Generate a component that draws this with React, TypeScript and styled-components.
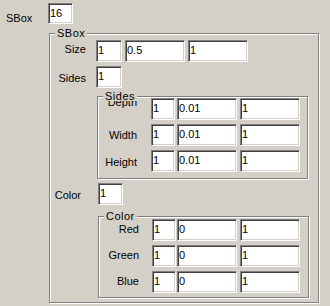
import React from 'react';
import styled, { createGlobalStyle } from 'styled-components';

const GlobalStyle = createGlobalStyle`
  body {
    margin: 0;
    background: #d4d0c8;
  }
`;

const SIDES = [
  { name: 'Depth', top: -2, values: ['1', '0.01', '1'] },
  { name: 'Width', top: 5, values: ['1', '0.01', '1'] },
  { name: 'Height', top: 6, values: ['1', '0.01', '1'] },
];

const COLORS = [
  { name: 'Red', top: 4, values: ['1', '0', '1'] },
  { name: 'Green', top: 4, values: ['1', '0', '1'] },
  { name: 'Blue', top: 4, values: ['1', '0', '1'] },
];

function App() {
  return (
    <Page>
      <GlobalStyle />
      <Row $pl={6} $h={21}>
        <Label $w={42} $top={9} $align='left'>
          SBox
        </Label>
        <Field $w={25} $h={21}>16</Field>
      </Row>

      <Group $w={270} $h={270} $mt={9} $ml={49} $pt={6}>
        <GroupTitle>SBox</GroupTitle>
        <Row>
          <Label $w={36} $top={3}>Size</Label>
          <Field $w={26} $ml={10}>1</Field>
          <Field $w={60} $ml={3}>0.5</Field>
          <Field $w={60} $ml={3}>1</Field>
        </Row>
        <Row $mt={4}>
          <Label $w={36} $top={6}>Sides</Label>
          <Field $w={26} $ml={10}>1</Field>
        </Row>

        <Group $w={211} $h={83} $mt={8} $ml={47} $pt={1} $gap={4}>
          <GroupTitle>Sides</GroupTitle>
          {SIDES.map((s) => (
            <Row key={s.name}>
              <Label $w={39} $top={s.top}>{s.name}</Label>
              <Field $w={24} $ml={14}>{s.values[0]}</Field>
              <Field $w={60} $ml={2}>{s.values[1]}</Field>
              <Field $w={60} $ml={3}>{s.values[2]}</Field>
            </Row>
          ))}
        </Group>

        <Row $mt={4}>
          <Label $w={31} $top={6}>Color</Label>
          <Field $w={25} $ml={17}>1</Field>
        </Row>

        <Group $w={211} $h={82} $mt={11} $ml={48} $pt={2} $gap={4}>
          <GroupTitle>Color</GroupTitle>
          {COLORS.map((c) => (
            <Row key={c.name}>
              <Label $w={40} $top={c.top}>{c.name}</Label>
              <Field $w={24} $ml={13}>{c.values[0]}</Field>
              <Field $w={60} $ml={1}>{c.values[1]}</Field>
              <Field $w={60} $ml={3}>{c.values[2]}</Field>
            </Row>
          ))}
        </Group>
      </Group>
    </Page>
  );
}

export default App;

const Page = styled.div`
  width: 330px;
  height: 306px;
  box-sizing: border-box;
  padding-top: 3px;
  overflow: hidden;
  background: #d4d0c8;
  color: #000;
  font-family: 'Liberation Sans', Arial, sans-serif;
  font-size: 11px;
`;

const Row = styled.div<{ $mt?: number; $pl?: number; $h?: number }>`
  display: flex;
  align-items: flex-start;
  height: ${(p) => p.$h ?? 22}px;
  margin-top: ${(p) => p.$mt ?? 0}px;
  padding-left: ${(p) => p.$pl ?? 0}px;
  flex-shrink: 0;
`;

const Label = styled.span<{ $w: number; $top: number; $align?: string }>`
  width: ${(p) => p.$w}px;
  margin-top: ${(p) => p.$top}px;
  flex-shrink: 0;
  line-height: 13px;
  text-align: ${(p) => p.$align ?? 'right'};
  white-space: nowrap;
`;

const Field = styled.div<{ $w: number; $h?: number; $ml?: number }>`
  box-sizing: border-box;
  width: ${(p) => p.$w}px;
  height: ${(p) => p.$h ?? 22}px;
  margin-left: ${(p) => p.$ml ?? 0}px;
  flex-shrink: 0;
  padding: 3px 0 0 1px;
  background: #fff;
  border-top: 1px solid #808080;
  border-left: 1px solid #808080;
  border-right: 1px solid #fff;
  border-bottom: 1px solid #fff;
  box-shadow: inset 1px 1px 0 #404040, inset -1px -1px 0 #d4d0c8;
  line-height: 13px;
  white-space: nowrap;
  overflow: hidden;
`;

const Group = styled.div<{
  $w: number;
  $h: number;
  $mt: number;
  $ml: number;
  $pt: number;
  $gap?: number;
}>`
  position: relative;
  box-sizing: border-box;
  width: ${(p) => p.$w}px;
  height: ${(p) => p.$h}px;
  margin-top: ${(p) => p.$mt}px;
  margin-left: ${(p) => p.$ml}px;
  padding-top: ${(p) => p.$pt}px;
  display: flex;
  flex-direction: column;
  gap: ${(p) => p.$gap ?? 0}px;
  flex-shrink: 0;
  border: 1px solid #808080;
  box-shadow: inset 1px 1px 0 #fff, 1px 1px 0 #fff;
`;

const GroupTitle = styled.span`
  position: absolute;
  top: -6px;
  left: 5px;
  z-index: 1;
  padding: 0 2px;
  background: #d4d0c8;
  line-height: 10px;
  letter-spacing: 0.5px;
  white-space: nowrap;
`;
